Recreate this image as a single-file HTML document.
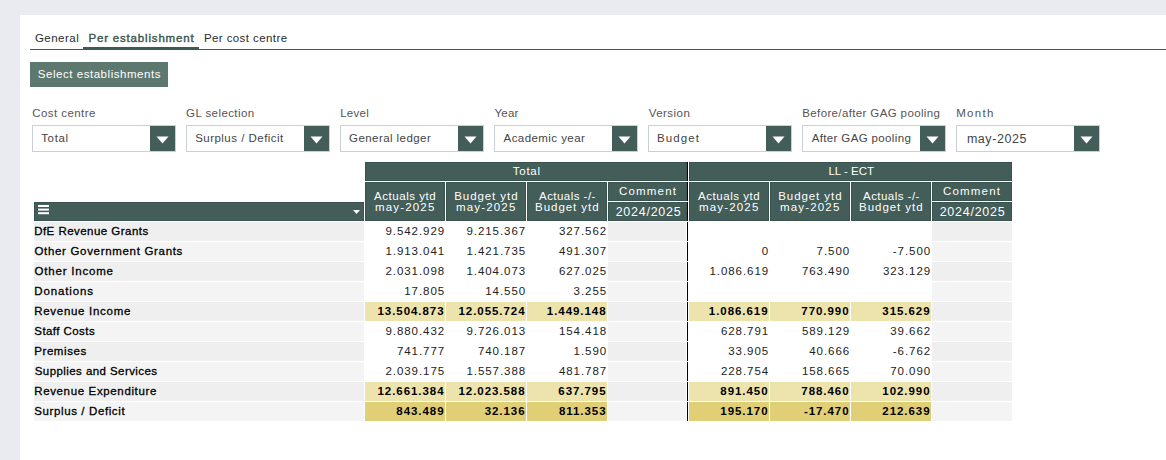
<!DOCTYPE html>
<html><head><meta charset="utf-8"><style>
html,body{margin:0;padding:0;}
body{width:1166px;height:460px;background:#e9ebf0;position:relative;overflow:hidden;font-family:"Liberation Sans", sans-serif;}
div{position:absolute;}
</style></head><body>
<div style="left:20px;top:15px;width:1146px;height:445px;background:#ffffff;"></div>
<div style="left:30px;top:49px;width:1136px;height:1px;background:#3f5a56;"></div>
<div style="left:83px;top:47px;width:116px;height:3px;background:#3f5a56;"></div>
<div style="top:28.00px;height:20px;line-height:20px;font-size:11.5px;font-weight:400;color:#2b2b2b;white-space:nowrap;letter-spacing:0.474px;left:34.96px;">General</div>
<div style="top:28.00px;height:20px;line-height:20px;font-size:11.5px;font-weight:400;color:#3c5550;white-space:nowrap;letter-spacing:0.822px;-webkit-text-stroke:0.4px #3c5550;left:88.44px;">Per establishment</div>
<div style="top:28.00px;height:20px;line-height:20px;font-size:11.5px;font-weight:400;color:#2b2b2b;white-space:nowrap;letter-spacing:0.416px;left:203.90px;">Per cost centre</div>
<div style="left:30px;top:62px;width:138px;height:25px;background:#5d786f;"></div>
<div style="top:63.50px;height:20px;line-height:20px;font-size:11.5px;font-weight:400;color:#ffffff;white-space:nowrap;letter-spacing:0.533px;left:37.86px;">Select establishments</div>
<div style="top:102.70px;height:20px;line-height:20px;font-size:11.5px;font-weight:400;color:#555555;white-space:nowrap;letter-spacing:0.425px;left:32.25px;">Cost centre</div>
<div style="left:32px;top:125px;width:142px;height:25px;border:1px solid #c9d0d8;background:#fff"></div>
<div style="left:150px;top:126px;width:25px;height:25px;background:#435d59;"></div>
<svg style="position:absolute;left:150px;top:126px" width="25" height="25"><path d="M6.5 10.5 L18.5 10.5 L12.5 17.5 Z" fill="#fff"/></svg>
<div style="top:128.00px;height:20px;line-height:20px;font-size:11.5px;font-weight:400;color:#444;white-space:nowrap;letter-spacing:0.638px;left:41.24px;">Total</div>
<div style="top:102.70px;height:20px;line-height:20px;font-size:11.5px;font-weight:400;color:#555555;white-space:nowrap;letter-spacing:0.418px;left:186.07px;">GL selection</div>
<div style="left:186px;top:125px;width:142px;height:25px;border:1px solid #c9d0d8;background:#fff"></div>
<div style="left:304px;top:126px;width:25px;height:25px;background:#435d59;"></div>
<svg style="position:absolute;left:304px;top:126px" width="25" height="25"><path d="M6.5 10.5 L18.5 10.5 L12.5 17.5 Z" fill="#fff"/></svg>
<div style="top:128.00px;height:20px;line-height:20px;font-size:11.5px;font-weight:400;color:#444;white-space:nowrap;letter-spacing:0.477px;left:195.13px;">Surplus / Deficit</div>
<div style="top:102.70px;height:20px;line-height:20px;font-size:11.5px;font-weight:400;color:#555555;white-space:nowrap;letter-spacing:0.290px;left:340.16px;">Level</div>
<div style="left:340px;top:125px;width:142px;height:25px;border:1px solid #c9d0d8;background:#fff"></div>
<div style="left:458px;top:126px;width:25px;height:25px;background:#435d59;"></div>
<svg style="position:absolute;left:458px;top:126px" width="25" height="25"><path d="M6.5 10.5 L18.5 10.5 L12.5 17.5 Z" fill="#fff"/></svg>
<div style="top:128.00px;height:20px;line-height:20px;font-size:11.5px;font-weight:400;color:#444;white-space:nowrap;letter-spacing:0.434px;left:349.04px;">General ledger</div>
<div style="top:102.70px;height:20px;line-height:20px;font-size:11.5px;font-weight:400;color:#555555;white-space:nowrap;letter-spacing:0.193px;left:494.49px;">Year</div>
<div style="left:494px;top:125px;width:142px;height:25px;border:1px solid #c9d0d8;background:#fff"></div>
<div style="left:612px;top:126px;width:25px;height:25px;background:#435d59;"></div>
<svg style="position:absolute;left:612px;top:126px" width="25" height="25"><path d="M6.5 10.5 L18.5 10.5 L12.5 17.5 Z" fill="#fff"/></svg>
<div style="top:128.00px;height:20px;line-height:20px;font-size:11.5px;font-weight:400;color:#444;white-space:nowrap;letter-spacing:0.439px;left:503.52px;">Academic year</div>
<div style="top:102.70px;height:20px;line-height:20px;font-size:11.5px;font-weight:400;color:#555555;white-space:nowrap;letter-spacing:0.446px;left:648.76px;">Version</div>
<div style="left:648px;top:125px;width:142px;height:25px;border:1px solid #c9d0d8;background:#fff"></div>
<div style="left:766px;top:126px;width:25px;height:25px;background:#435d59;"></div>
<svg style="position:absolute;left:766px;top:126px" width="25" height="25"><path d="M6.5 10.5 L18.5 10.5 L12.5 17.5 Z" fill="#fff"/></svg>
<div style="top:128.00px;height:20px;line-height:20px;font-size:11.5px;font-weight:400;color:#444;white-space:nowrap;letter-spacing:1.136px;left:656.95px;">Budget</div>
<div style="top:102.70px;height:20px;line-height:20px;font-size:11.5px;font-weight:400;color:#555555;white-space:nowrap;letter-spacing:0.372px;left:802.26px;">Before/after GAG pooling</div>
<div style="left:802px;top:125px;width:142px;height:25px;border:1px solid #c9d0d8;background:#fff"></div>
<div style="left:920px;top:126px;width:25px;height:25px;background:#435d59;"></div>
<svg style="position:absolute;left:920px;top:126px" width="25" height="25"><path d="M6.5 10.5 L18.5 10.5 L12.5 17.5 Z" fill="#fff"/></svg>
<div style="top:128.00px;height:20px;line-height:20px;font-size:11.5px;font-weight:400;color:#444;white-space:nowrap;letter-spacing:0.367px;left:811.67px;">After GAG pooling</div>
<div style="top:102.70px;height:20px;line-height:20px;font-size:11.5px;font-weight:400;color:#555555;white-space:nowrap;letter-spacing:1.270px;left:956.24px;">Month</div>
<div style="left:956px;top:125px;width:142px;height:25px;border:1px solid #c9d0d8;background:#fff"></div>
<div style="left:1074px;top:126px;width:25px;height:25px;background:#435d59;"></div>
<svg style="position:absolute;left:1074px;top:126px" width="25" height="25"><path d="M6.5 10.5 L18.5 10.5 L12.5 17.5 Z" fill="#fff"/></svg>
<div style="top:129.00px;height:20px;line-height:20px;font-size:12.5px;font-weight:400;color:#444;white-space:nowrap;letter-spacing:0.567px;left:966.88px;">may-2025</div>
<div style="left:365px;top:162px;width:322px;height:19px;background:#435d59;box-shadow:inset 0 0 0 1px #3a534f;"></div>
<div style="left:689px;top:162px;width:323px;height:19px;background:#435d59;box-shadow:inset 0 0 0 1px #3a534f;"></div>
<div style="top:161.00px;height:20px;line-height:20px;font-size:11.5px;font-weight:400;color:#fff;white-space:nowrap;letter-spacing:0.732px;left:326.80px;width:400px;text-align:center;">Total</div>
<div style="top:161.00px;height:20px;line-height:20px;font-size:11.5px;font-weight:400;color:#fff;white-space:nowrap;letter-spacing:-0.021px;left:651.23px;width:400px;text-align:center;">LL - ECT</div>
<div style="left:365px;top:182px;width:80px;height:39px;background:#435d59;box-shadow:inset 0 0 0 1px #3a534f;"></div>
<div style="left:446px;top:182px;width:80px;height:39px;background:#435d59;box-shadow:inset 0 0 0 1px #3a534f;"></div>
<div style="left:527px;top:182px;width:80px;height:39px;background:#435d59;box-shadow:inset 0 0 0 1px #3a534f;"></div>
<div style="left:608px;top:182px;width:79px;height:19px;background:#435d59;box-shadow:inset 0 0 0 1px #3a534f;"></div>
<div style="left:608px;top:202px;width:79px;height:19px;background:#435d59;box-shadow:inset 0 0 0 1px #3a534f;"></div>
<div style="top:186.00px;height:20px;line-height:20px;font-size:11.5px;font-weight:400;color:#fff;white-space:nowrap;letter-spacing:0.539px;left:205.13px;width:400px;text-align:center;">Actuals ytd</div>
<div style="top:196.80px;height:20px;line-height:20px;font-size:11.5px;font-weight:400;color:#fff;white-space:nowrap;letter-spacing:1.157px;left:205.27px;width:400px;text-align:center;">may-2025</div>
<div style="top:186.00px;height:20px;line-height:20px;font-size:11.5px;font-weight:400;color:#fff;white-space:nowrap;letter-spacing:0.929px;left:286.35px;width:400px;text-align:center;">Budget ytd</div>
<div style="top:196.80px;height:20px;line-height:20px;font-size:11.5px;font-weight:400;color:#fff;white-space:nowrap;letter-spacing:1.157px;left:286.27px;width:400px;text-align:center;">may-2025</div>
<div style="top:186.00px;height:20px;line-height:20px;font-size:11.5px;font-weight:400;color:#fff;white-space:nowrap;letter-spacing:0.458px;left:367.45px;width:400px;text-align:center;">Actuals -/-</div>
<div style="top:196.80px;height:20px;line-height:20px;font-size:11.5px;font-weight:400;color:#fff;white-space:nowrap;letter-spacing:0.944px;left:367.33px;width:400px;text-align:center;">Budget ytd</div>
<div style="top:181.00px;height:20px;line-height:20px;font-size:11.5px;font-weight:400;color:#fff;white-space:nowrap;letter-spacing:1.171px;left:448.07px;width:400px;text-align:center;">Comment</div>
<div style="top:202.00px;height:20px;line-height:20px;font-size:12.5px;font-weight:400;color:#fff;white-space:nowrap;letter-spacing:0.745px;left:448.54px;width:400px;text-align:center;">2024/2025</div>
<div style="left:689px;top:182px;width:80px;height:39px;background:#435d59;box-shadow:inset 0 0 0 1px #3a534f;"></div>
<div style="left:770px;top:182px;width:80px;height:39px;background:#435d59;box-shadow:inset 0 0 0 1px #3a534f;"></div>
<div style="left:851px;top:182px;width:80px;height:39px;background:#435d59;box-shadow:inset 0 0 0 1px #3a534f;"></div>
<div style="left:932px;top:182px;width:80px;height:19px;background:#435d59;box-shadow:inset 0 0 0 1px #3a534f;"></div>
<div style="left:932px;top:202px;width:80px;height:19px;background:#435d59;box-shadow:inset 0 0 0 1px #3a534f;"></div>
<div style="top:186.00px;height:20px;line-height:20px;font-size:11.5px;font-weight:400;color:#fff;white-space:nowrap;letter-spacing:0.539px;left:529.13px;width:400px;text-align:center;">Actuals ytd</div>
<div style="top:196.80px;height:20px;line-height:20px;font-size:11.5px;font-weight:400;color:#fff;white-space:nowrap;letter-spacing:1.157px;left:529.27px;width:400px;text-align:center;">may-2025</div>
<div style="top:186.00px;height:20px;line-height:20px;font-size:11.5px;font-weight:400;color:#fff;white-space:nowrap;letter-spacing:0.929px;left:610.35px;width:400px;text-align:center;">Budget ytd</div>
<div style="top:196.80px;height:20px;line-height:20px;font-size:11.5px;font-weight:400;color:#fff;white-space:nowrap;letter-spacing:1.157px;left:610.27px;width:400px;text-align:center;">may-2025</div>
<div style="top:186.00px;height:20px;line-height:20px;font-size:11.5px;font-weight:400;color:#fff;white-space:nowrap;letter-spacing:0.458px;left:691.45px;width:400px;text-align:center;">Actuals -/-</div>
<div style="top:196.80px;height:20px;line-height:20px;font-size:11.5px;font-weight:400;color:#fff;white-space:nowrap;letter-spacing:0.944px;left:691.33px;width:400px;text-align:center;">Budget ytd</div>
<div style="top:181.00px;height:20px;line-height:20px;font-size:11.5px;font-weight:400;color:#fff;white-space:nowrap;letter-spacing:1.171px;left:772.07px;width:400px;text-align:center;">Comment</div>
<div style="top:202.00px;height:20px;line-height:20px;font-size:12.5px;font-weight:400;color:#fff;white-space:nowrap;letter-spacing:0.745px;left:772.54px;width:400px;text-align:center;">2024/2025</div>
<div style="left:34px;top:202px;width:330px;height:19px;background:#435d59;box-shadow:inset 0 0 0 1px #3a534f;"></div>
<svg style="position:absolute;left:34px;top:202px" width="330" height="19"><rect x="4" y="3" width="11" height="2" fill="#fff"/><rect x="4" y="6.6" width="11" height="2" fill="#fff"/><rect x="4" y="10.2" width="11" height="2" fill="#fff"/><path d="M319 8 L326 8 L322.5 12 Z" fill="#fff"/></svg>
<div style="left:34px;top:222px;width:330px;height:19px;background:#efefef;"></div>
<div style="top:221.00px;height:20px;line-height:20px;font-size:11.5px;font-weight:400;color:#000;white-space:nowrap;letter-spacing:0.463px;-webkit-text-stroke:0.3px #000;left:34.19px;">DfE Revenue Grants</div>
<div style="top:221.00px;height:20px;line-height:20px;font-size:11.5px;font-weight:400;color:#222;white-space:nowrap;letter-spacing:0.950px;left:45.15px;width:400px;text-align:right;">9.542.929</div>
<div style="top:221.00px;height:20px;line-height:20px;font-size:11.5px;font-weight:400;color:#222;white-space:nowrap;letter-spacing:0.950px;left:126.15px;width:400px;text-align:right;">9.215.367</div>
<div style="top:221.00px;height:20px;line-height:20px;font-size:11.5px;font-weight:400;color:#222;white-space:nowrap;letter-spacing:0.950px;left:207.15px;width:400px;text-align:right;">327.562</div>
<div style="left:608px;top:222px;width:78px;height:19px;background:#efefef;"></div>
<div style="left:932px;top:222px;width:80px;height:19px;background:#efefef;"></div>
<div style="left:34px;top:242px;width:330px;height:19px;background:#f4f4f4;"></div>
<div style="top:241.00px;height:20px;line-height:20px;font-size:11.5px;font-weight:400;color:#000;white-space:nowrap;letter-spacing:0.683px;-webkit-text-stroke:0.3px #000;left:34.41px;">Other Government Grants</div>
<div style="top:241.00px;height:20px;line-height:20px;font-size:11.5px;font-weight:400;color:#222;white-space:nowrap;letter-spacing:0.950px;left:45.15px;width:400px;text-align:right;">1.913.041</div>
<div style="top:241.00px;height:20px;line-height:20px;font-size:11.5px;font-weight:400;color:#222;white-space:nowrap;letter-spacing:0.950px;left:126.15px;width:400px;text-align:right;">1.421.735</div>
<div style="top:241.00px;height:20px;line-height:20px;font-size:11.5px;font-weight:400;color:#222;white-space:nowrap;letter-spacing:0.950px;left:207.15px;width:400px;text-align:right;">491.307</div>
<div style="left:608px;top:242px;width:78px;height:19px;background:#f4f4f4;"></div>
<div style="top:241.00px;height:20px;line-height:20px;font-size:11.5px;font-weight:400;color:#222;white-space:nowrap;letter-spacing:0.950px;left:369.15px;width:400px;text-align:right;">0</div>
<div style="top:241.00px;height:20px;line-height:20px;font-size:11.5px;font-weight:400;color:#222;white-space:nowrap;letter-spacing:0.950px;left:450.15px;width:400px;text-align:right;">7.500</div>
<div style="top:241.00px;height:20px;line-height:20px;font-size:11.5px;font-weight:400;color:#222;white-space:nowrap;letter-spacing:0.950px;left:531.15px;width:400px;text-align:right;">-7.500</div>
<div style="left:932px;top:242px;width:80px;height:19px;background:#f4f4f4;"></div>
<div style="left:34px;top:262px;width:330px;height:19px;background:#efefef;"></div>
<div style="top:261.00px;height:20px;line-height:20px;font-size:11.5px;font-weight:400;color:#000;white-space:nowrap;letter-spacing:0.799px;-webkit-text-stroke:0.3px #000;left:34.57px;">Other Income</div>
<div style="top:261.00px;height:20px;line-height:20px;font-size:11.5px;font-weight:400;color:#222;white-space:nowrap;letter-spacing:0.950px;left:45.15px;width:400px;text-align:right;">2.031.098</div>
<div style="top:261.00px;height:20px;line-height:20px;font-size:11.5px;font-weight:400;color:#222;white-space:nowrap;letter-spacing:0.950px;left:126.15px;width:400px;text-align:right;">1.404.073</div>
<div style="top:261.00px;height:20px;line-height:20px;font-size:11.5px;font-weight:400;color:#222;white-space:nowrap;letter-spacing:0.950px;left:207.15px;width:400px;text-align:right;">627.025</div>
<div style="left:608px;top:262px;width:78px;height:19px;background:#efefef;"></div>
<div style="top:261.00px;height:20px;line-height:20px;font-size:11.5px;font-weight:400;color:#222;white-space:nowrap;letter-spacing:0.950px;left:369.15px;width:400px;text-align:right;">1.086.619</div>
<div style="top:261.00px;height:20px;line-height:20px;font-size:11.5px;font-weight:400;color:#222;white-space:nowrap;letter-spacing:0.950px;left:450.15px;width:400px;text-align:right;">763.490</div>
<div style="top:261.00px;height:20px;line-height:20px;font-size:11.5px;font-weight:400;color:#222;white-space:nowrap;letter-spacing:0.950px;left:531.15px;width:400px;text-align:right;">323.129</div>
<div style="left:932px;top:262px;width:80px;height:19px;background:#efefef;"></div>
<div style="left:34px;top:282px;width:330px;height:19px;background:#f4f4f4;"></div>
<div style="top:281.00px;height:20px;line-height:20px;font-size:11.5px;font-weight:400;color:#000;white-space:nowrap;letter-spacing:0.869px;-webkit-text-stroke:0.3px #000;left:34.22px;">Donations</div>
<div style="top:281.00px;height:20px;line-height:20px;font-size:11.5px;font-weight:400;color:#222;white-space:nowrap;letter-spacing:0.950px;left:45.15px;width:400px;text-align:right;">17.805</div>
<div style="top:281.00px;height:20px;line-height:20px;font-size:11.5px;font-weight:400;color:#222;white-space:nowrap;letter-spacing:0.950px;left:126.15px;width:400px;text-align:right;">14.550</div>
<div style="top:281.00px;height:20px;line-height:20px;font-size:11.5px;font-weight:400;color:#222;white-space:nowrap;letter-spacing:0.950px;left:207.15px;width:400px;text-align:right;">3.255</div>
<div style="left:608px;top:282px;width:78px;height:19px;background:#f4f4f4;"></div>
<div style="left:932px;top:282px;width:80px;height:19px;background:#f4f4f4;"></div>
<div style="left:34px;top:302px;width:330px;height:19px;background:#efefef;"></div>
<div style="top:301.00px;height:20px;line-height:20px;font-size:11.5px;font-weight:400;color:#000;white-space:nowrap;letter-spacing:0.708px;-webkit-text-stroke:0.3px #000;left:34.21px;">Revenue Income</div>
<div style="left:365px;top:302px;width:80px;height:19px;background:#ede3ad;"></div>
<div style="top:301.00px;height:20px;line-height:20px;font-size:11.5px;font-weight:700;color:#000;white-space:nowrap;letter-spacing:0.950px;left:44.55px;width:400px;text-align:right;">13.504.873</div>
<div style="left:446px;top:302px;width:80px;height:19px;background:#ede3ad;"></div>
<div style="top:301.00px;height:20px;line-height:20px;font-size:11.5px;font-weight:700;color:#000;white-space:nowrap;letter-spacing:0.950px;left:125.55px;width:400px;text-align:right;">12.055.724</div>
<div style="left:527px;top:302px;width:80px;height:19px;background:#ede3ad;"></div>
<div style="top:301.00px;height:20px;line-height:20px;font-size:11.5px;font-weight:700;color:#000;white-space:nowrap;letter-spacing:0.950px;left:206.55px;width:400px;text-align:right;">1.449.148</div>
<div style="left:608px;top:302px;width:78px;height:19px;background:#efefef;"></div>
<div style="left:689px;top:302px;width:80px;height:19px;background:#ede3ad;"></div>
<div style="top:301.00px;height:20px;line-height:20px;font-size:11.5px;font-weight:700;color:#000;white-space:nowrap;letter-spacing:0.950px;left:368.55px;width:400px;text-align:right;">1.086.619</div>
<div style="left:770px;top:302px;width:80px;height:19px;background:#ede3ad;"></div>
<div style="top:301.00px;height:20px;line-height:20px;font-size:11.5px;font-weight:700;color:#000;white-space:nowrap;letter-spacing:0.950px;left:449.55px;width:400px;text-align:right;">770.990</div>
<div style="left:851px;top:302px;width:80px;height:19px;background:#ede3ad;"></div>
<div style="top:301.00px;height:20px;line-height:20px;font-size:11.5px;font-weight:700;color:#000;white-space:nowrap;letter-spacing:0.950px;left:530.55px;width:400px;text-align:right;">315.629</div>
<div style="left:932px;top:302px;width:80px;height:19px;background:#efefef;"></div>
<div style="left:34px;top:322px;width:330px;height:19px;background:#f4f4f4;"></div>
<div style="top:321.00px;height:20px;line-height:20px;font-size:11.5px;font-weight:400;color:#000;white-space:nowrap;letter-spacing:0.428px;-webkit-text-stroke:0.3px #000;left:34.32px;">Staff Costs</div>
<div style="top:321.00px;height:20px;line-height:20px;font-size:11.5px;font-weight:400;color:#222;white-space:nowrap;letter-spacing:0.950px;left:45.15px;width:400px;text-align:right;">9.880.432</div>
<div style="top:321.00px;height:20px;line-height:20px;font-size:11.5px;font-weight:400;color:#222;white-space:nowrap;letter-spacing:0.950px;left:126.15px;width:400px;text-align:right;">9.726.013</div>
<div style="top:321.00px;height:20px;line-height:20px;font-size:11.5px;font-weight:400;color:#222;white-space:nowrap;letter-spacing:0.950px;left:207.15px;width:400px;text-align:right;">154.418</div>
<div style="left:608px;top:322px;width:78px;height:19px;background:#f4f4f4;"></div>
<div style="top:321.00px;height:20px;line-height:20px;font-size:11.5px;font-weight:400;color:#222;white-space:nowrap;letter-spacing:0.950px;left:369.15px;width:400px;text-align:right;">628.791</div>
<div style="top:321.00px;height:20px;line-height:20px;font-size:11.5px;font-weight:400;color:#222;white-space:nowrap;letter-spacing:0.950px;left:450.15px;width:400px;text-align:right;">589.129</div>
<div style="top:321.00px;height:20px;line-height:20px;font-size:11.5px;font-weight:400;color:#222;white-space:nowrap;letter-spacing:0.950px;left:531.15px;width:400px;text-align:right;">39.662</div>
<div style="left:932px;top:322px;width:80px;height:19px;background:#f4f4f4;"></div>
<div style="left:34px;top:342px;width:330px;height:19px;background:#efefef;"></div>
<div style="top:341.00px;height:20px;line-height:20px;font-size:11.5px;font-weight:400;color:#000;white-space:nowrap;letter-spacing:0.590px;-webkit-text-stroke:0.3px #000;left:34.21px;">Premises</div>
<div style="top:341.00px;height:20px;line-height:20px;font-size:11.5px;font-weight:400;color:#222;white-space:nowrap;letter-spacing:0.950px;left:45.15px;width:400px;text-align:right;">741.777</div>
<div style="top:341.00px;height:20px;line-height:20px;font-size:11.5px;font-weight:400;color:#222;white-space:nowrap;letter-spacing:0.950px;left:126.15px;width:400px;text-align:right;">740.187</div>
<div style="top:341.00px;height:20px;line-height:20px;font-size:11.5px;font-weight:400;color:#222;white-space:nowrap;letter-spacing:0.950px;left:207.15px;width:400px;text-align:right;">1.590</div>
<div style="left:608px;top:342px;width:78px;height:19px;background:#efefef;"></div>
<div style="top:341.00px;height:20px;line-height:20px;font-size:11.5px;font-weight:400;color:#222;white-space:nowrap;letter-spacing:0.950px;left:369.15px;width:400px;text-align:right;">33.905</div>
<div style="top:341.00px;height:20px;line-height:20px;font-size:11.5px;font-weight:400;color:#222;white-space:nowrap;letter-spacing:0.950px;left:450.15px;width:400px;text-align:right;">40.666</div>
<div style="top:341.00px;height:20px;line-height:20px;font-size:11.5px;font-weight:400;color:#222;white-space:nowrap;letter-spacing:0.950px;left:531.15px;width:400px;text-align:right;">-6.762</div>
<div style="left:932px;top:342px;width:80px;height:19px;background:#efefef;"></div>
<div style="left:34px;top:362px;width:330px;height:19px;background:#f4f4f4;"></div>
<div style="top:361.00px;height:20px;line-height:20px;font-size:11.5px;font-weight:400;color:#000;white-space:nowrap;letter-spacing:0.427px;-webkit-text-stroke:0.3px #000;left:34.77px;">Supplies and Services</div>
<div style="top:361.00px;height:20px;line-height:20px;font-size:11.5px;font-weight:400;color:#222;white-space:nowrap;letter-spacing:0.950px;left:45.15px;width:400px;text-align:right;">2.039.175</div>
<div style="top:361.00px;height:20px;line-height:20px;font-size:11.5px;font-weight:400;color:#222;white-space:nowrap;letter-spacing:0.950px;left:126.15px;width:400px;text-align:right;">1.557.388</div>
<div style="top:361.00px;height:20px;line-height:20px;font-size:11.5px;font-weight:400;color:#222;white-space:nowrap;letter-spacing:0.950px;left:207.15px;width:400px;text-align:right;">481.787</div>
<div style="left:608px;top:362px;width:78px;height:19px;background:#f4f4f4;"></div>
<div style="top:361.00px;height:20px;line-height:20px;font-size:11.5px;font-weight:400;color:#222;white-space:nowrap;letter-spacing:0.950px;left:369.15px;width:400px;text-align:right;">228.754</div>
<div style="top:361.00px;height:20px;line-height:20px;font-size:11.5px;font-weight:400;color:#222;white-space:nowrap;letter-spacing:0.950px;left:450.15px;width:400px;text-align:right;">158.665</div>
<div style="top:361.00px;height:20px;line-height:20px;font-size:11.5px;font-weight:400;color:#222;white-space:nowrap;letter-spacing:0.950px;left:531.15px;width:400px;text-align:right;">70.090</div>
<div style="left:932px;top:362px;width:80px;height:19px;background:#f4f4f4;"></div>
<div style="left:34px;top:382px;width:330px;height:19px;background:#efefef;"></div>
<div style="top:381.00px;height:20px;line-height:20px;font-size:11.5px;font-weight:400;color:#000;white-space:nowrap;letter-spacing:0.642px;-webkit-text-stroke:0.3px #000;left:34.21px;">Revenue Expenditure</div>
<div style="left:365px;top:382px;width:80px;height:19px;background:#ede3ad;"></div>
<div style="top:381.00px;height:20px;line-height:20px;font-size:11.5px;font-weight:700;color:#000;white-space:nowrap;letter-spacing:0.950px;left:44.55px;width:400px;text-align:right;">12.661.384</div>
<div style="left:446px;top:382px;width:80px;height:19px;background:#ede3ad;"></div>
<div style="top:381.00px;height:20px;line-height:20px;font-size:11.5px;font-weight:700;color:#000;white-space:nowrap;letter-spacing:0.950px;left:125.55px;width:400px;text-align:right;">12.023.588</div>
<div style="left:527px;top:382px;width:80px;height:19px;background:#ede3ad;"></div>
<div style="top:381.00px;height:20px;line-height:20px;font-size:11.5px;font-weight:700;color:#000;white-space:nowrap;letter-spacing:0.950px;left:206.55px;width:400px;text-align:right;">637.795</div>
<div style="left:608px;top:382px;width:78px;height:19px;background:#efefef;"></div>
<div style="left:689px;top:382px;width:80px;height:19px;background:#ede3ad;"></div>
<div style="top:381.00px;height:20px;line-height:20px;font-size:11.5px;font-weight:700;color:#000;white-space:nowrap;letter-spacing:0.950px;left:368.55px;width:400px;text-align:right;">891.450</div>
<div style="left:770px;top:382px;width:80px;height:19px;background:#ede3ad;"></div>
<div style="top:381.00px;height:20px;line-height:20px;font-size:11.5px;font-weight:700;color:#000;white-space:nowrap;letter-spacing:0.950px;left:449.55px;width:400px;text-align:right;">788.460</div>
<div style="left:851px;top:382px;width:80px;height:19px;background:#ede3ad;"></div>
<div style="top:381.00px;height:20px;line-height:20px;font-size:11.5px;font-weight:700;color:#000;white-space:nowrap;letter-spacing:0.950px;left:530.55px;width:400px;text-align:right;">102.990</div>
<div style="left:932px;top:382px;width:80px;height:19px;background:#efefef;"></div>
<div style="left:34px;top:402px;width:330px;height:19px;background:#f4f4f4;"></div>
<div style="top:401.00px;height:20px;line-height:20px;font-size:11.5px;font-weight:400;color:#000;white-space:nowrap;letter-spacing:0.610px;-webkit-text-stroke:0.3px #000;left:34.31px;">Surplus / Deficit</div>
<div style="left:365px;top:402px;width:80px;height:19px;background:#e0cf77;"></div>
<div style="top:401.00px;height:20px;line-height:20px;font-size:11.5px;font-weight:700;color:#000;white-space:nowrap;letter-spacing:0.950px;left:44.55px;width:400px;text-align:right;">843.489</div>
<div style="left:446px;top:402px;width:80px;height:19px;background:#e0cf77;"></div>
<div style="top:401.00px;height:20px;line-height:20px;font-size:11.5px;font-weight:700;color:#000;white-space:nowrap;letter-spacing:0.950px;left:125.55px;width:400px;text-align:right;">32.136</div>
<div style="left:527px;top:402px;width:80px;height:19px;background:#e0cf77;"></div>
<div style="top:401.00px;height:20px;line-height:20px;font-size:11.5px;font-weight:700;color:#000;white-space:nowrap;letter-spacing:0.950px;left:206.55px;width:400px;text-align:right;">811.353</div>
<div style="left:608px;top:402px;width:78px;height:19px;background:#f4f4f4;"></div>
<div style="left:689px;top:402px;width:80px;height:19px;background:#e0cf77;"></div>
<div style="top:401.00px;height:20px;line-height:20px;font-size:11.5px;font-weight:700;color:#000;white-space:nowrap;letter-spacing:0.950px;left:368.55px;width:400px;text-align:right;">195.170</div>
<div style="left:770px;top:402px;width:80px;height:19px;background:#e0cf77;"></div>
<div style="top:401.00px;height:20px;line-height:20px;font-size:11.5px;font-weight:700;color:#000;white-space:nowrap;letter-spacing:0.950px;left:449.55px;width:400px;text-align:right;">-17.470</div>
<div style="left:851px;top:402px;width:80px;height:19px;background:#e0cf77;"></div>
<div style="top:401.00px;height:20px;line-height:20px;font-size:11.5px;font-weight:700;color:#000;white-space:nowrap;letter-spacing:0.950px;left:530.55px;width:400px;text-align:right;">212.639</div>
<div style="left:932px;top:402px;width:80px;height:19px;background:#f4f4f4;"></div>
<div style="left:687px;top:162px;width:1px;height:19px;background:#000;"></div>
<div style="left:687px;top:182px;width:1px;height:19px;background:#000;"></div>
<div style="left:687px;top:202px;width:1px;height:19px;background:#000;"></div>
<div style="left:687px;top:222px;width:1px;height:19px;background:#000;"></div>
<div style="left:687px;top:242px;width:1px;height:19px;background:#000;"></div>
<div style="left:687px;top:262px;width:1px;height:19px;background:#000;"></div>
<div style="left:687px;top:282px;width:1px;height:19px;background:#000;"></div>
<div style="left:687px;top:302px;width:1px;height:19px;background:#000;"></div>
<div style="left:687px;top:322px;width:1px;height:19px;background:#000;"></div>
<div style="left:687px;top:342px;width:1px;height:19px;background:#000;"></div>
<div style="left:687px;top:362px;width:1px;height:19px;background:#000;"></div>
<div style="left:687px;top:382px;width:1px;height:19px;background:#000;"></div>
<div style="left:687px;top:402px;width:1px;height:19px;background:#000;"></div>
</body></html>
